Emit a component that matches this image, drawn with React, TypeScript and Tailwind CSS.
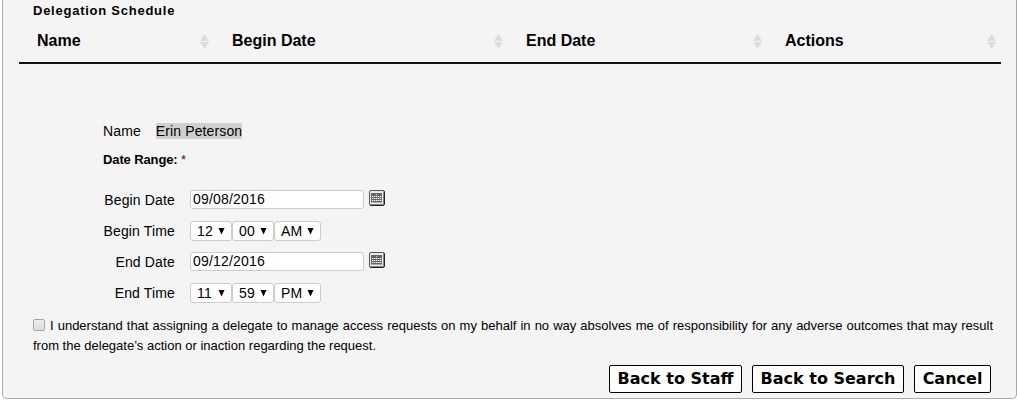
import type { ReactNode } from 'react';

interface Column {
  label: string;
  width: string;
}

const columns: Column[] = [
  { label: 'Name', width: 'w-[195px]' },
  { label: 'Begin Date', width: 'w-[294px]' },
  { label: 'End Date', width: 'w-[259px]' },
  { label: 'Actions', width: 'w-[234px]' },
];

function SortIcon() {
  return (
    <svg width="9" height="15" viewBox="0 0 9 15" fill="#dcdcdc">
      <path d="M4.5 0L9 7H0Z" />
      <path d="M0 8H9L4.5 15Z" />
    </svg>
  );
}

function CalendarIcon() {
  return (
    <svg width="16" height="16" viewBox="0 0 16 16">
      <rect x="0.5" y="0.5" width="15" height="15" rx="1.5" fill="#ececec" stroke="#555" />
      <path d="M15.25 1.5V14.5M1.5 15.25H14.5" stroke="#222" strokeWidth="1.5" />
      <path d="M2 3H13V13H2Z" fill="#666" />
      <path d="M3 6.5H13M3 8.5H13M3 10.5H13" stroke="#fff" strokeWidth="1.2" strokeDasharray="1.3 0.7" />
      <path d="M2 12.5H13" stroke="#aaa" />
      <rect x="7" y="4" width="1" height="1" fill="#ccc" />
    </svg>
  );
}

function Row({ label, children }: { label: string; children: ReactNode }) {
  return (
    <div className="flex h-[31px] items-start">
      <label className="mr-[15px] w-[172px] text-right leading-[20px]">{label}</label>
      {children}
    </div>
  );
}

function DateField({ value }: { value: string }) {
  return (
    <div className="flex">
      <input
        type="text"
        defaultValue={value}
        className="mr-[5px] h-[19px] w-[174px] rounded-[3px] border border-[#ccc] bg-white px-[2px] pb-[2px] leading-[15px] tracking-[0.2px]"
      />
      <button type="button" aria-label="Pick a date" className="h-4 w-4">
        <CalendarIcon />
      </button>
    </div>
  );
}

function TimePart({ value, width }: { value: string; width: string }) {
  return (
    <div className={`flex h-5 items-center justify-between rounded-[3px] border border-[#ccc] bg-white pl-[6px] pr-[6px] ${width}`}>
      <span className="leading-[18px]">{value}</span>
      <svg width="7" height="7" viewBox="0 0 7 7">
        <path d="M0.5 0H6.5L3.5 6.5Z" fill="#000" />
      </svg>
    </div>
  );
}

function TimeField({ hour, minute, period }: { hour: string; minute: string; period: string }) {
  return (
    <div className="flex">
      <TimePart value={hour} width="w-[42px]" />
      <TimePart value={minute} width="w-[42px]" />
      <TimePart value={period} width="w-[47px]" />
    </div>
  );
}

function FooterButton({ children, width }: { children: ReactNode; width: string }) {
  return (
    <button
      type="button"
      className={`h-7 rounded-[2px] border border-black bg-white font-['DejaVu_Sans',sans-serif] text-[16px] font-bold whitespace-nowrap ${width}`}
    >
      {children}
    </button>
  );
}

export default function App() {
  return (
    <div className="h-[400px] overflow-hidden bg-white pl-[2px] font-['Liberation_Sans',Arial,sans-serif] text-[14px] text-black">
      <div className="h-[399px] w-[1015px] rounded-b-[5px] border border-t-0 border-[#aaa] bg-[#f4f4f4]">
        <h2 className="h-5 pl-[30px] text-[13px] leading-[21px] font-bold tracking-[0.75px]">Delegation Schedule</h2>

        {/* Schedule table, no rows yet */}
        <table className="ml-4 w-[982px] table-fixed border-collapse">
          <thead>
            <tr className="h-[43px] border-b-2 border-[#111]">
              {columns.map((column) => (
                <th key={column.label} className={`p-0 text-left align-top ${column.width}`}>
                  <div className="flex h-[42px] items-center justify-between pl-[18px] pr-[5px]">
                    <span className="text-[16px] leading-5">{column.label}</span>
                    <SortIcon />
                  </div>
                </th>
              ))}
            </tr>
          </thead>
        </table>

        {/* Delegate details */}
        <div className="mt-[57px] flex h-[30px] pl-[100px] leading-[20px] tracking-[0.12px]">
          <span className="mr-[15px]">Name</span>
          <span className="mt-[2px] h-4 bg-[#d0d0d0] leading-4">Erin Peterson</span>
        </div>
        <div className="h-[39px] pl-[100px] text-[13px] leading-[17px] tracking-[-0.12px]">
          <b>Date Range:</b> <span className="text-[#511]">*</span>
        </div>
        <div className="h-[126px] tracking-[0.15px]">
          <Row label="Begin Date">
            <DateField value="09/08/2016" />
          </Row>
          <Row label="Begin Time">
            <TimeField hour="12" minute="00" period="AM" />
          </Row>
          <Row label="End Date">
            <DateField value="09/12/2016" />
          </Row>
          <Row label="End Time">
            <TimeField hour="11" minute="59" period="PM" />
          </Row>
        </div>

        {/* Acknowledgement */}
        <div className="ml-[30px] h-[49px] w-[960px] text-[13px] leading-5">
          <div className="flex items-center">
            <input
              type="checkbox"
              className="mr-[5px] mb-[2px] h-3 w-3 shrink-0 appearance-none rounded-[2px] border border-[#a5a5a5] bg-linear-to-b from-[#eee] to-[#dcdcdc]"
            />
            <p className="w-[943px] text-justify whitespace-nowrap [text-align-last:justify]">
              I understand that assigning a delegate to manage access requests on my behalf in no way absolves me of responsibility for any adverse outcomes that may result
            </p>
          </div>
          <p>from the delegate’s action or inaction regarding the request.</p>
        </div>

        <div className="flex justify-end gap-[10px] pr-[25px]">
          <FooterButton width="w-[133px]">Back to Staff</FooterButton>
          <FooterButton width="w-[152px]">Back to Search</FooterButton>
          <FooterButton width="w-[77px]">Cancel</FooterButton>
        </div>
      </div>
    </div>
  );
}
